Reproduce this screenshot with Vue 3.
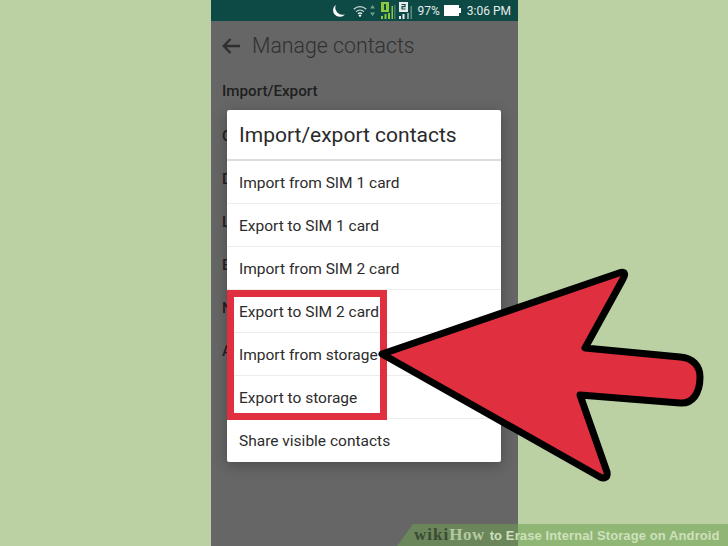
<script setup>
// 背景设置列表被对话框挡住，只露出首字母
const settings = ['C', 'D', 'L', 'E', 'N', 'A']

const options = [
  'Import from SIM 1 card',
  'Export to SIM 1 card',
  'Import from SIM 2 card',
  'Export to SIM 2 card',
  'Import from storage',
  'Export to storage',
  'Share visible contacts'
]
</script>

<template>
  <div class="page">
    <div class="phone">
      <div class="status-bar">
        <svg class="moon" width="15" height="14" viewBox="0 0 15 14">
          <path d="M5 .8A6.6 6.6 0 1 0 14 10.2 7 7 0 0 1 5 .8Z" fill="#fff" />
        </svg>
        <svg class="wifi" width="14" height="12" viewBox="0 0 14 12" fill="none" stroke="#cfd8d6">
          <path d="M.8 4.2a9 9 0 0 1 12.4 0" stroke-width="1.2" />
          <path d="M3 6.6a6 6 0 0 1 8 0" stroke-width="1.2" />
          <path d="M5 8.7a3 3 0 0 1 4 0" stroke="#fff" stroke-width="1.3" />
          <circle cx="7" cy="10.6" r="1.2" fill="#fff" stroke="none" />
        </svg>
        <svg class="arrows" width="5" height="11" viewBox="0 0 5 11">
          <path d="M2.5 0 5 3.5H0ZM2.5 11 0 7.5h5Z" fill="#6fa08f" />
        </svg>
        <svg class="sim" width="15" height="17" viewBox="0 0 15 17">
          <rect x="0" y="0" width="8" height="10" fill="#8dc63f" />
          <rect x="3" y="2" width="2" height="6" fill="#0d4a45" />
          <rect x="0" y="14" width="2" height="3" fill="#8dc63f" />
          <rect x="3.5" y="12" width="2" height="5" fill="#8dc63f" />
          <rect x="7" y="11" width="2" height="6" fill="#8dc63f" />
          <rect x="10.5" y="4" width="1.5" height="13" fill="#8dc63f" />
          <rect x="13" y="3" width="1.5" height="14" fill="#3d7a6c" />
        </svg>
        <svg class="sim" width="15" height="17" viewBox="0 0 15 17">
          <rect x="0" y="0" width="9" height="10" fill="#e8eeee" />
          <path d="M2.5 2.5h3.500v2.200h-3v2.300h3.500" fill="none" stroke="#0d4a45" stroke-width="1.200" />
          <rect x="0" y="14" width="2" height="3" fill="#e8eeee" />
          <rect x="3.500" y="12" width="2" height="5" fill="#e8eeee" />
          <rect x="8" y="11" width="2" height="6" fill="#8fa8a4" />
          <rect x="11.500" y="4" width="1.500" height="13" fill="#5f8a82" />
        </svg>
        <span class="percent">97%</span>
        <svg class="battery" width="17" height="11" viewBox="0 0 17 11">
          <rect x="0" y="0" width="15" height="11" fill="#fff" />
          <rect x="15" y="3" width="2" height="5" fill="#fff" />
        </svg>
        <span class="clock">3:06 PM</span>
      </div>

      <div class="screen">
        <div class="toolbar">
          <svg width="18" height="16" viewBox="0 0 18 16" fill="none" stroke="#2f2f2f" stroke-width="2.400">
            <path d="M18 8H2M8.500 1 1.800 8l6.700 7" />
          </svg>
          <span class="toolbar-title">Manage contacts</span>
        </div>
        <div class="section-title">Import/Export</div>
        <div v-for="item in settings" :key="item" class="setting">{{ item }}</div>
      </div>

      <div class="dialog">
        <div class="dialog-title">Import/export contacts</div>
        <div v-for="opt in options" :key="opt" class="option">{{ opt }}</div>
      </div>
    </div>

    <div class="highlight"></div>

    <svg class="arrow" width="728" height="546" viewBox="0 0 728 546">
      <path
        d="M382 354 619 273C625 271 626 274 623 279L585 348 680 357C693 358 700 366 700 377 700 394 692 404 680 403L580 395 607 472C608 478 604 479 600 477Z"
        fill="#e03040"
        stroke="#000"
        stroke-width="7"
        stroke-linejoin="round"
      />
    </svg>

    <div class="banner">
      <span class="wiki">wiki</span><span class="how">How</span>
      <span class="banner-text">to Erase Internal Storage on Android</span>
    </div>
  </div>
</template>

<style scoped>
.page {
  position: relative;
  width: 728px;
  height: 546px;
  overflow: hidden;
  background-color: #bbd1a3;
  font-family: Roboto, "Liberation Sans", sans-serif;
}

.phone {
  position: relative;
  width: 307px;
  height: 546px;
  margin-left: 211px;
  background-color: #666;
}

.status-bar {
  display: flex;
  align-items: center;
  justify-content: flex-end;
  height: 21px;
  padding-right: 7px;
  background-color: #0d4a45;
  color: #e4ecea;
  font-size: 12px;
}

.moon { margin-right: 7px; }
.wifi { margin-right: 3px; }
.arrows { margin-right: 6px; }
.sim { margin-right: 3px; }
.percent { margin-left: 1px; margin-right: 4px; }
.battery { margin-right: 6px; }

.screen {
  padding: 0 11px;
  color: #222;
}

.toolbar {
  display: flex;
  align-items: center;
  gap: 12px;
  height: 49px;
}

.toolbar-title {
  font-size: 21.300px;
  font-weight: 300;
  color: #303030;
}

.section-title {
  margin-top: 9px;
  margin-bottom: 23px;
  font-size: 15.200px;
  font-weight: 500;
  color: #1f1f1f;
  line-height: 24px;
}

.setting {
  height: 43px;
  font-size: 15px;
  font-weight: 500;
  line-height: 20px;
  white-space: nowrap;
}

.dialog {
  position: absolute;
  left: 16px;
  top: 110px;
  width: 274px;
  background-color: #fff;
  border-radius: 2px;
  box-shadow: 0 3px 14px rgba(0, 0, 0, 0.28);
}

.dialog-title {
  height: 49px;
  padding-left: 12px;
  border-bottom: 2px solid #dcdcdc;
  font-size: 21px;
  line-height: 50px;
  color: #2a2a2a;
}

.option {
  height: 42px;
  padding-left: 12px;
  border-bottom: 1px solid #ececec;
  font-size: 15.500px;
  line-height: 44px;
  color: #2c2c2c;
}

.option:last-child {
  height: 43px;
  border-bottom: none;
}

.highlight {
  position: absolute;
  left: 227px;
  top: 290px;
  width: 160px;
  height: 130px;
  box-sizing: border-box;
  border: 7px solid #e03040;
}

.arrow {
  position: absolute;
  left: 0;
  top: 0;
}

.banner {
  position: absolute;
  left: 397px;
  right: 0;
  bottom: 0;
  height: 22px;
  padding-left: 17px;
  display: flex;
  align-items: center;
  clip-path: polygon(16px 0, 100% 0, 100% 100%, 0 100%);
  background-color: rgba(110, 160, 80, 0.55);
  white-space: nowrap;
}

.wiki {
  font-family: "Liberation Serif", serif;
  font-size: 17px;
  font-weight: 700;
  letter-spacing: 1px;
  color: #3c4a34;
}

.how {
  font-family: "Liberation Serif", serif;
  font-size: 17px;
  font-weight: 700;
  letter-spacing: 0.500px;
  color: #b4c9a0;
}

.banner-text {
  margin-left: 5px;
  font-family: "Liberation Sans", sans-serif;
  font-size: 13px;
  font-weight: 700;
  letter-spacing: 0.100px;
  color: #cfe0bc;
}
</style>
